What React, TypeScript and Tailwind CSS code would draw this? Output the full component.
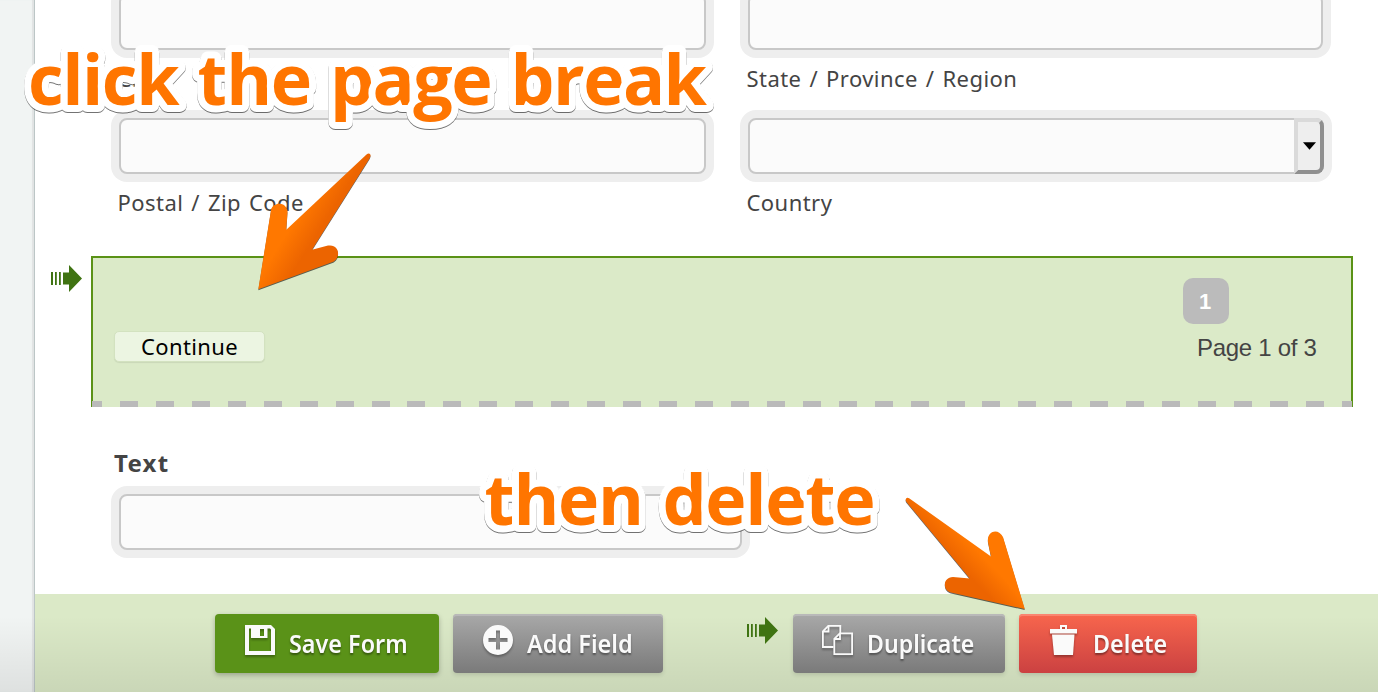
import type { ReactNode } from "react";
import clsx from "clsx";

function FieldBox({ className, children }: { className?: string; children?: ReactNode }) {
  return (
    <div className={clsx("h-[72px] rounded-2xl bg-[#eeeeee] p-2", className)}>
      <div className="relative h-full rounded-lg border-2 border-[#c8c8c8] bg-[#fbfbfb]">
        {children}
      </div>
    </div>
  );
}

function SubLabel({ children }: { children: ReactNode }) {
  return (
    <p className="h-[52px] whitespace-nowrap pl-[6.500px] pt-[5px] text-[22px] leading-[30px] tracking-[0.45px] text-[#444444] [word-spacing:1.8px]">
      {children}
    </p>
  );
}

function GreenArrow() {
  return (
    <svg width="31" height="27" viewBox="0 0 31 27" fill="#3f7312" className="shrink-0">
      <path d="M0 7h2v13H0zM4 7h1.800v13H4zM8 7h1.800v13H8zM12 7.500h6V0l13 13.500L18 27v-7.500h-6z" />
    </svg>
  );
}

function SaveIcon() {
  return (
    <svg width="30" height="30" viewBox="0 0 30 30" className="drop-shadow-[0_2px_1px_rgba(0,0,0,0.3)]">
      <path
        fillRule="evenodd"
        fill="#fafafa"
        d="M0 0h26l4 4v26H0zM4 4v22h22V4.500L25 3.500h-2.500v9.500H6V3.500H4zM15 4v7h4V4z"
      />
    </svg>
  );
}

function PlusIcon() {
  return (
    <svg width="30" height="30" viewBox="0 0 30 30" className="drop-shadow-[0_2px_1px_rgba(0,0,0,0.3)]">
      <path
        fillRule="evenodd"
        fill="#fafafa"
        d="M15 0a15 15 0 1 1 0 30a15 15 0 1 1 0-30zM13 5.500v7.500H5.500v4H13v7.500h4V17h7.500v-4H17V5.500z"
      />
    </svg>
  );
}

function CopyIcon() {
  return (
    <svg
      width="31"
      height="30"
      viewBox="0 0 31 30"
      fill="none"
      stroke="#fafafa"
      strokeWidth="1.8"
      className="drop-shadow-[0_2px_1px_rgba(0,0,0,0.3)]"
    >
      <path d="M11.500 22H.9V6.300L6.300.9h12V8" />
      <path d="M1 6.500h5.500V1" />
      <path d="M12.300 13.800L17.800 8.300h12.300v20.800H12.300z" />
      <path d="M12.500 14H18V8.500" />
    </svg>
  );
}

function TrashIcon() {
  return (
    <svg width="27" height="30" viewBox="0 0 27 30" fill="#fafafa" className="drop-shadow-[0_2px_1px_rgba(0,0,0,0.3)]">
      <path fillRule="evenodd" d="M10 0h7v4h10v4.500H0V4h10zM12 2v2h3V2z" />
      <path d="M2 9.500h22.500L23 30H4z" />
    </svg>
  );
}

interface ToolButtonProps {
  icon: ReactNode;
  label: string;
  className: string;
  labelClassName?: string;
}

function ToolButton({ icon, label, className, labelClassName }: ToolButtonProps) {
  return (
    <button
      className={clsx(
        "flex h-[59px] items-start gap-[14px] rounded-[4px] pt-[11px] text-[#fafafa]",
        className
      )}
    >
      {icon}
      <span
        className={clsx(
          "mt-[2px] w-0 origin-left whitespace-nowrap text-left text-[25px] font-semibold leading-[32px] [text-shadow:0_2px_2px_rgba(0,0,0,0.4)]",
          labelClassName
        )}
      >
        {label}
      </span>
    </button>
  );
}

const grayButton =
  "bg-linear-to-b from-[#a9a9a9] to-[#7a7a7a] shadow-[inset_0_2px_0_#b9b9b9,0_2px_4px_rgba(0,0,0,0.12)]";

// Hand-drawn style notes laid over the form
function Annotations() {
  return (
    <svg
      width="1378"
      height="692"
      viewBox="0 0 1378 692"
      className="pointer-events-none absolute left-0 top-0 z-20"
    >
      <defs>
        <linearGradient id="arrowDown" gradientUnits="userSpaceOnUse" x1="294" y1="222" x2="316" y2="236">
          <stop offset="0" stopColor="#ff7800" />
          <stop offset="1" stopColor="#ec6400" />
        </linearGradient>
        <linearGradient id="arrowRight" gradientUnits="userSpaceOnUse" x1="980" y1="553" x2="963" y2="569">
          <stop offset="0" stopColor="#ff7800" />
          <stop offset="1" stopColor="#ec6400" />
        </linearGradient>
      </defs>
      <g
        fill="#ff7500"
        stroke="#ffffff"
        strokeWidth="14"
        strokeLinejoin="round"
        paintOrder="stroke"
        fontSize="70"
        fontWeight="700"
        className="font-['Open_Sans','Noto_Sans',sans-serif] drop-shadow-[0_1px_0.5px_rgba(0,0,0,0.55)] [word-spacing:3px]"
      >
        <text x="28" y="105" textLength="679">
          click the page break
        </text>
        <text x="484.5" y="525" textLength="391">
          then delete
        </text>
      </g>
      <g className="drop-shadow-[0_1px_0.5px_rgba(0,0,0,0.6)]">
        <path
          fill="url(#arrowDown)"
          d="M366.500 154.500Q369 152.500 370.300 154.500Q371 156 369.500 158.500L312 249.700L328 245.600C340 243.500 341 259 332.500 262L258.300 289.300L271 210C273 201.500 287 201.500 287.500 212L286.300 229.700Z"
        />
        <path
          fill="url(#arrowRight)"
          d="M909.500 498.500Q907 497 905.800 499Q905.300 500.500 906.500 502L969.800 578.500L953 577C943 577 942 590 951 592.500L1024.800 609L1003 537C999 528 986.500 530 988 542L991 556.500Z"
        />
      </g>
    </svg>
  );
}

export default function App() {
  return (
    <div className="relative flex h-[692px] w-[1378px] overflow-hidden bg-white font-['Noto_Sans','Open_Sans',sans-serif]">
      <div className="w-[35px] shrink-0 border-r border-[#bcc6c6] bg-[#f1f4f3] shadow-[inset_-2px_0_1px_#e0e3e3]" />

      <div className="flex flex-1 flex-col">
        <main className="h-[594px]">
          {/* Address fields */}
          <div className="-mt-[14px] flex items-start gap-[26px] pl-[76px]">
            <div className="w-[603px]">
              <FieldBox />
              <SubLabel>City</SubLabel>
              <FieldBox />
              <SubLabel>Postal / Zip Code</SubLabel>
            </div>
            <div className="w-[592px]">
              <FieldBox className="w-[591px]" />
              <SubLabel>State / Province / Region</SubLabel>
              <FieldBox>
                <div className="absolute -bottom-[2px] -right-[2px] -top-[2px] flex w-[30px] items-center justify-center rounded-r-lg border-4 border-b-[#8f8f8f] border-l-[#dadada] border-r-[#8f8f8f] border-t-[#dadada] bg-[#eeeeee]">
                  <svg width="13" height="8" viewBox="0 0 14 8" className="shrink-0">
                    <path d="M0 0h14L7 8z" />
                  </svg>
                </div>
              </FieldBox>
              <SubLabel>Country</SubLabel>
            </div>
          </div>

          {/* Page break */}
          <div className="mt-[22px] flex items-start pl-4">
            <div className="w-10 pt-[9px]">
              <GreenArrow />
            </div>
            <section className="flex h-[151px] w-[1262px] flex-col justify-between border-x-2 border-t-2 border-[#5a9216] bg-[#dbeac8]">
              <div className="flex justify-between pl-[21px] pr-[33px] pt-5">
                <button className="mt-[53px] h-[31px] w-[151px] rounded-[5px] border border-[#d3e2c0] bg-[#ecf5e2] text-[22px] leading-[25px] tracking-[0.4px] text-black shadow-[0_1px_1px_rgba(0,0,0,0.08)]">
                  Continue
                </button>
                <div className="w-[135px] font-['Liberation_Sans',Arial,sans-serif]">
                  <div className="flex h-[46px] w-[46px] items-center justify-center rounded-[10px] bg-[#bbbbbb] pr-[2px] text-[22px] font-bold text-white">
                    1
                  </div>
                  <p className="mt-[10px] whitespace-nowrap pl-[14px] text-[24px] leading-[28px] tracking-[-0.3px] text-[#444444]">
                    Page 1 of 3
                  </p>
                </div>
              </div>
              <div className="-mx-[1px] h-[6px] bg-[repeating-linear-gradient(90deg,#bababa_0_18px,#dbeac8_18px_35.94px)] bg-[position:-8px_0] bg-[length:1300px_6px]" />
            </section>
          </div>

          {/* Text field */}
          <div className="pl-[76px] pt-10">
            <h2 className="h-[39px] pl-[3px] text-[24px] font-bold leading-[31px] tracking-[1.3px] text-[#444444]">
              Text
            </h2>
            <FieldBox className="w-[639px]" />
          </div>
        </main>

        {/* Toolbar */}
        <footer className="flex h-[98px] items-start bg-[#dbe9c7] pl-[180px]">
          <div className="relative z-10 flex items-start pt-5">
            <ToolButton
              icon={<SaveIcon />}
              label="Save Form"
              className="w-[224px] bg-[#5a9218] pl-[30px] shadow-[0_2px_5px_rgba(0,0,0,0.25)]"
              labelClassName="scale-x-[0.935]"
            />
            <ToolButton
              icon={<PlusIcon />}
              label="Add Field"
              className={clsx("ml-[14px] w-[210px] pl-[30px]", grayButton)}
              labelClassName="scale-x-[0.94]"
            />
            <div className="ml-[84px] mt-[3px] w-[46px]">
              <GreenArrow />
            </div>
            <ToolButton
              icon={<CopyIcon />}
              label="Duplicate"
              className={clsx("w-[212px] pl-[29px]", grayButton)}
              labelClassName="scale-x-[0.925]"
            />
            <ToolButton
              icon={<TrashIcon />}
              label="Delete"
              className="ml-[14px] w-[178px] bg-linear-to-b from-[#f8664d] to-[#cb4141] pl-[31px] shadow-[inset_0_2px_0_#fa8570,0_2px_4px_rgba(0,0,0,0.12)]"
              labelClassName="ml-[2px] scale-x-[0.935]"
            />
          </div>
        </footer>
      </div>

      {/* Shade along the bottom edge, under the buttons */}
      <div className="pointer-events-none absolute bottom-0 left-0 h-[76px] w-full bg-linear-to-b from-black/0 to-black/8" />
      <Annotations />
    </div>
  );
}
